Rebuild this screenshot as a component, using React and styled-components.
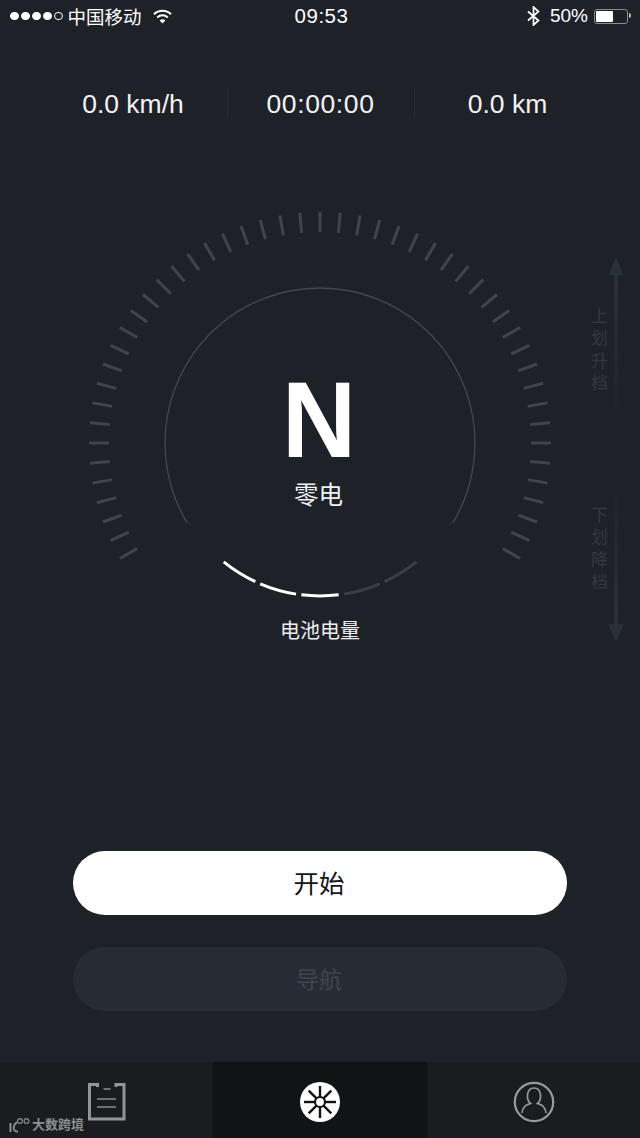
import styled, { createGlobalStyle } from "styled-components";

const GlobalStyle = createGlobalStyle`
  html, body {
    margin: 0;
    padding: 0;
    background: #1e2128;
  }
`;

const sans = `"Liberation Sans", "Noto Sans CJK SC", sans-serif`;

const Screen = styled.div`
  width: 640px;
  height: 1138px;
  display: flex;
  flex-direction: column;
  overflow: hidden;
  position: relative;
  background: #1e2128;
  color: #fff;
  font-family: ${sans};
`;

const StatusBar = styled.div`
  height: 32px;
  display: grid;
  grid-template-columns: 1fr auto 1fr;
  align-items: center;
  padding: 0 8px 0 10px;
  font-size: 18.5px;
`;

const StatusGroup = styled.div`
  display: flex;
  align-items: center;
  justify-content: ${(p) => (p.$end ? "flex-end" : "flex-start")};
`;

const Signal = styled.div`
  display: flex;
  gap: 2.5px;
  margin-right: 5px;
`;

const SignalDot = styled.span`
  width: 8.5px;
  height: 8.5px;
  border-radius: 50%;
  box-sizing: border-box;
  background: ${(p) => (p.$off ? "transparent" : "#fff")};
  border: 1px solid #fff;
`;

const Carrier = styled.span`
  margin-right: 11px;
`;

const Percent = styled.span`
  margin-left: 10px;
  font-size: 19px;
`;

const Clock = styled.div`
  margin-left: 1px;
  font-size: 20.5px;
  letter-spacing: 0.5px;
`;

const Battery = styled.div`
  width: 34px;
  height: 15px;
  box-sizing: border-box;
  margin: 0 4px 0 6px;
  padding: 1px;
  border: 1px solid #8b8d92;
  border-radius: 3px;
  position: relative;

  &::before {
    content: "";
    display: block;
    width: 17px;
    height: 100%;
    background: #fff;
    border-radius: 1px;
  }

  &::after {
    content: "";
    position: absolute;
    right: -4px;
    top: 3px;
    width: 2px;
    height: 5px;
    background: #b5b6b9;
    border-radius: 0 2px 2px 0;
  }
`;

const Stats = styled.div`
  margin-top: 56px;
  padding: 0 39.5px;
  display: grid;
  grid-template-columns: repeat(3, 187px);
`;

const Stat = styled.div`
  height: 30px;
  line-height: 32px;
  text-align: center;
  font-size: 26.5px;
  letter-spacing: ${(p) => (p.$timer ? "0.6px" : "0")};
  color: #f2f3f4;
  border-left: ${(p) => (p.$first ? "none" : "1px solid #292c35")};
`;

const Stage = styled.div`
  margin-top: 82px;
  height: 450px;
  display: grid;
`;

const Dial = styled.svg`
  grid-area: 1 / 1;
  display: block;
`;

const Readout = styled.div`
  grid-area: 1 / 1;
  justify-self: center;
  display: flex;
  flex-direction: column;
  align-items: center;
  padding-top: 160px;
`;

const Gear = styled.div`
  font-size: 108px;
  line-height: 120px;
  font-weight: 700;
  color: #fff;
  transform: translateX(-1px) scaleX(0.95);
`;

const GearHint = styled.div`
  margin-top: 1px;
  font-size: 24.5px;
  line-height: 30px;
  color: #f0f1f2;
  transform: translateX(-1.5px);
`;

const BatteryLabel = styled.div`
  font-size: 20px;
  line-height: 28px;
  margin-top: 106px;
  color: #eceded;
`;

const ShiftRail = styled.div`
  grid-area: 1 / 1;
  justify-self: end;
  align-self: start;
  margin: 57px 15px 0 0;
  display: flex;
  gap: 1px;
`;

const ShiftLabels = styled.div`
  display: flex;
  flex-direction: column;
  padding-top: 50px;
  gap: 109px;
`;

const ShiftLabel = styled.div`
  writing-mode: vertical-rl;
  text-orientation: upright;
  font-size: 17px;
  line-height: 17px;
  letter-spacing: 5.5px;
  color: #343842;
`;

const Actions = styled.div`
  margin-top: 201px;
  padding: 0 73px;
  display: flex;
  flex-direction: column;
  gap: 32px;
`;

const ActionButton = styled.button`
  height: 64px;
  padding: 0 2px 3px 0;
  border: none;
  border-radius: 32px;
  font-family: ${sans};
  font-size: ${(p) => (p.$muted ? "23px" : "25.5px")};
  background: ${(p) => (p.$muted ? "#272c34" : "#fff")};
  color: ${(p) => (p.$muted ? "#41454e" : "#14151a")};
`;

const TabBar = styled.nav`
  margin-top: auto;
  height: 76px;
  display: grid;
  grid-template-columns: 213px 214px 213px;
  background: #1a1c20;
`;

const Tab = styled.div`
  display: flex;
  align-items: center;
  justify-content: center;
  padding-top: 4px;
  background: ${(p) => (p.$active ? "#121315" : "transparent")};
`;

const Watermark = styled.div`
  position: absolute;
  left: 8px;
  bottom: 5px;
  display: flex;
  align-items: center;
  gap: 2px;
  font-size: 13px;
  line-height: 16px;
  font-weight: 700;
  color: #8e8f92;
`;

const CENTER_X = 320;
const CENTER_Y = 243;

const polar = (radius, deg) => {
  const rad = (deg * Math.PI) / 180;
  return [CENTER_X + radius * Math.sin(rad), CENTER_Y - radius * Math.cos(rad)];
};

const arc = (radius, from, to) => {
  const [x1, y1] = polar(radius, from);
  const [x2, y2] = polar(radius, to);
  const large = Math.abs(to - from) > 180 ? 1 : 0;
  return `M${x1} ${y1}A${radius} ${radius} 0 ${large} 1 ${x2} ${y2}`;
};

const ticks = Array.from({ length: 49 }, (_, i) => -120 + i * 5);

// clockwise from the left end of the battery arc, degrees from 12 o'clock
const batteryCells = [
  { from: 219, to: 205, on: true },
  { from: 203, to: 189, on: true },
  { from: 187, to: 173, on: true },
  { from: 171, to: 157, on: false },
  { from: 155, to: 141, on: false },
];

const Gauge = () => (
  <Dial width="640" height="450" viewBox="0 0 640 450" fill="none">
    {ticks.map((deg) => {
      const [x1, y1] = polar(211, deg);
      const [x2, y2] = polar(231, deg);
      return (
        <line key={deg} x1={x1} y1={y1} x2={x2} y2={y2} stroke="#3e4450" strokeWidth="3" />
      );
    })}
    <path d={arc(155, -121, 121)} stroke="#434853" strokeWidth="1.3" />
    {batteryCells.map((cell) => (
      <path
        key={cell.from}
        d={`M${polar(153, cell.from).join(" ")}A153 153 0 0 0 ${polar(153, cell.to).join(" ")}`}
        stroke={cell.on ? "#ffffff" : "#3a3e47"}
        strokeWidth="3"
      />
    ))}
  </Dial>
);

const ShiftArrow = () => (
  <svg width="18" height="385" viewBox="0 0 18 385" fill="none">
    <defs>
      <linearGradient id="shaftUp" x1="0" y1="0" x2="0" y2="1">
        <stop offset="0" stopColor="#2a3039" />
        <stop offset="1" stopColor="#1e2128" />
      </linearGradient>
      <linearGradient id="shaftDown" x1="0" y1="1" x2="0" y2="0">
        <stop offset="0" stopColor="#2a3039" />
        <stop offset="1" stopColor="#1e2128" />
      </linearGradient>
    </defs>
    <path d="M9 0L17 18H1Z" fill="#2a3039" />
    <rect x="7" y="18" width="4" height="142" fill="url(#shaftUp)" />
    <rect x="7" y="225" width="4" height="142" fill="url(#shaftDown)" />
    <path d="M9 385L17 367H1Z" fill="#2a3039" />
  </svg>
);

const WifiIcon = () => (
  <svg width="19" height="15" viewBox="0 0 19 15" fill="none" stroke="#fff" strokeWidth="2">
    <path d="M1 5.2C5.8 .6 13.2 .6 18 5.2" />
    <path d="M4.2 8.4C7.2 5.6 11.8 5.6 14.8 8.4" />
    <path d="M9.5 14.5L6.6 11.4C8.2 9.9 10.8 9.9 12.4 11.4Z" fill="#fff" stroke="none" />
  </svg>
);

const BluetoothIcon = () => (
  <svg width="13" height="20" viewBox="0 0 13 20" fill="none" stroke="#fff" strokeWidth="1.7">
    <path d="M1 5.5L11.5 14.5L6.5 19V1L11.5 5.5L1 14.5" />
  </svg>
);

const RecordsIcon = () => (
  <svg width="38" height="38" viewBox="0 0 38 38" fill="none" stroke="#949597">
    <path d="M9.5 4V1.5H1.5V36H36V1.5H28V4" strokeWidth="3" />
    <path d="M15.5 6H22.5M9 16H28M9 24H28" strokeWidth="1.6" stroke="#8a8b8d" />
  </svg>
);

const WheelIcon = () => {
  const spokes = [0, 45, 90, 135, 180, 225, 270, 315];
  return (
    <svg width="40" height="40" viewBox="0 0 40 40">
      <circle cx="20" cy="20" r="20" fill="#fff" />
      {spokes.map((deg) => (
        <line
          key={deg}
          x1="20"
          y1="15"
          x2="20"
          y2="4"
          stroke="#121315"
          strokeWidth="2.4"
          transform={`rotate(${deg} 20 20)`}
        />
      ))}
      <circle cx="20" cy="20" r="5" fill="#fff" stroke="#121315" strokeWidth="2.2" />
    </svg>
  );
};

const ProfileIcon = () => (
  <svg width="42" height="42" viewBox="0 0 42 42" fill="none" stroke="#9a9b9d">
    <circle cx="21" cy="21" r="19.2" strokeWidth="2.2" />
    <path
      d="M9 32C9.5 26 13 23.5 17.5 22.5C13 19 13 7 21 7C29 7 29 19 24.5 22.5C29 23.5 32.5 26 33 32"
      strokeWidth="1.7"
    />
  </svg>
);

const WatermarkLogo = () => (
  <svg width="22" height="15" viewBox="0 0 22 15" fill="none" stroke="#8e8f92" strokeWidth="1.1">
    <path d="M2.5 5V14" strokeWidth="2" />
    <path d="M9 4C4.5 8 4.5 14 10 13.5" strokeWidth="1.8" />
    <circle cx="12" cy="3" r="2.4" />
    <circle cx="18.5" cy="3" r="2.4" />
  </svg>
);

const App = () => (
  <Screen>
    <GlobalStyle />
    <StatusBar>
      <StatusGroup>
        <Signal>
          <SignalDot />
          <SignalDot />
          <SignalDot />
          <SignalDot />
          <SignalDot $off />
        </Signal>
        <Carrier>中国移动</Carrier>
        <WifiIcon />
      </StatusGroup>
      <Clock>09:53</Clock>
      <StatusGroup $end>
        <BluetoothIcon />
        <Percent>50%</Percent>
        <Battery />
      </StatusGroup>
    </StatusBar>

    <Stats>
      <Stat $first>0.0 km/h</Stat>
      <Stat $timer>00:00:00</Stat>
      <Stat>0.0 km</Stat>
    </Stats>

    <Stage>
      <Gauge />
      <Readout>
        <Gear>N</Gear>
        <GearHint>零电</GearHint>
        <BatteryLabel>电池电量</BatteryLabel>
      </Readout>
      <ShiftRail>
        <ShiftLabels>
          <ShiftLabel>上划升档</ShiftLabel>
          <ShiftLabel>下划降档</ShiftLabel>
        </ShiftLabels>
        <ShiftArrow />
      </ShiftRail>
    </Stage>

    <Actions>
      <ActionButton>开始</ActionButton>
      <ActionButton $muted>导航</ActionButton>
    </Actions>

    <TabBar>
      <Tab>
        <RecordsIcon />
      </Tab>
      <Tab $active>
        <WheelIcon />
      </Tab>
      <Tab>
        <ProfileIcon />
      </Tab>
    </TabBar>

    <Watermark>
      <WatermarkLogo />
      <span>大数跨境</span>
    </Watermark>
  </Screen>
);

export default App;
